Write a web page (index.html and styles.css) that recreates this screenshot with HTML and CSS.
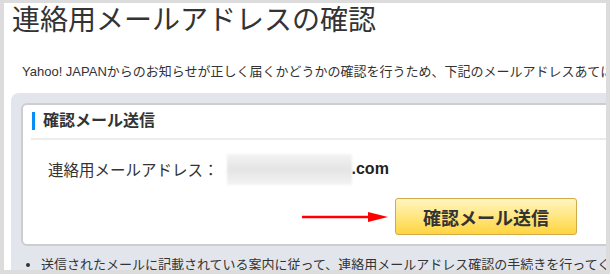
FILE: index.html
```html
<!DOCTYPE html>
<html lang="ja">
<head>
    <meta charset="utf-8">
    <title>連絡用メールアドレスの確認</title>
    <link rel="stylesheet" href="styles.css">
</head>
<body>
    <div class="frame">
        <h1 class="title">連絡用メールアドレスの確認</h1>
        <p class="intro">Yahoo! JAPANからのお知らせが正しく届くかどうかの確認を行うため、下記のメールアドレスあてにメールを送信します。</p>

        <div class="panel">
            <div class="card">
                <div class="card-head">
                    <h2 class="card-title">確認メール送信</h2>
                </div>
                <div class="address">
                    <span class="address-label">連絡用メールアドレス：</span>
                    <span class="address-blur"></span>
                    <span class="address-domain">.com</span>
                </div>
                <div class="action">
                    <svg class="arrow" width="86" height="12" viewBox="0 0 86 12">
                        <line x1="0" y1="6" x2="70" y2="6" stroke="#f00" stroke-width="2.5"/>
                        <polygon points="66,1 86,6 66,11" fill="#f00"/>
                    </svg>
                    <button class="send">確認メール送信</button>
                </div>
            </div>
            <ul class="notes">
                <li>送信されたメールに記載されている案内に従って、連絡用メールアドレス確認の手続きを行ってください。</li>
            </ul>
        </div>
    </div>
</body>
</html>
```

FILE: styles.css
```css
html,
body {
    margin: 0;
    padding: 0;
    background: #fff;
}
.frame {
    width: 610px;
    height: 274px;
    box-sizing: border-box;
    border: 4px solid #dcdcdc;
    border-top-width: 3px;
    overflow: hidden;
    background: #fff;
    color: #333;
    font-family: "Liberation Sans", "Noto Sans CJK JP", sans-serif;
}
.title {
    margin: 0 0 0 8px;
    font-size: 28px;
    font-weight: normal;
    line-height: 36px;
    white-space: nowrap;
}
.intro {
    margin: 23px 0 0 18px;
    font-size: 13px;
    line-height: 20px;
    white-space: nowrap;
}
.panel {
    margin: 11px 0 0 7px;
    width: 660px;
    padding: 10px;
    background: #e2e5ec;
    border-radius: 8px;
}
.card {
    background: #fff;
    border: 2px solid #cdcdcd;
    border-radius: 6px;
    padding-bottom: 9px;
}
.card-head {
    margin: 7px 10px 0 8px;
    padding-bottom: 8px;
    border-bottom: 2px solid #ececec;
}
.card-title {
    margin: 0 0 0 1px;
    padding-left: 8px;
    border-left: 3px solid #0a8ef5;
    font-size: 16px;
    line-height: 18px;
    font-weight: bold;
}
.address {
    display: flex;
    align-items: center;
    margin-top: 13px;
    padding-left: 25px;
    height: 32px;
    font-size: 15.5px;
}
.address-blur {
    width: 125px;
    height: 31px;
    margin-left: 8px;
    background:
        linear-gradient(180deg, rgba(255,255,255,0.5), rgba(220,220,220,0.4) 50%, rgba(255,255,255,0.5)),
        #e9e9e9;
    filter: blur(1px);
}
.address-domain {
    font-weight: bold;
    font-size: 16px;
    color: #222;
}
.action {
    display: flex;
    align-items: center;
    margin-top: 13px;
    padding-left: 279px;
    gap: 7px;
}
.arrow {
    display: block;
}
.send {
    width: 182px;
    height: 37px;
    padding: 0;
    border: 1px solid #d1ab49;
    border-radius: 3px;
    background: linear-gradient(180deg, #fff6c0 0%, #ffe680 50%, #ffd43f 100%);
    color: #333;
    font-family: "Liberation Sans", "Noto Sans CJK JP", sans-serif;
    font-size: 18px;
    font-weight: bold;
}
.notes {
    margin: 9px 0 0;
    padding-left: 20px;
    font-size: 13px;
    line-height: 20px;
    white-space: nowrap;
}
```
